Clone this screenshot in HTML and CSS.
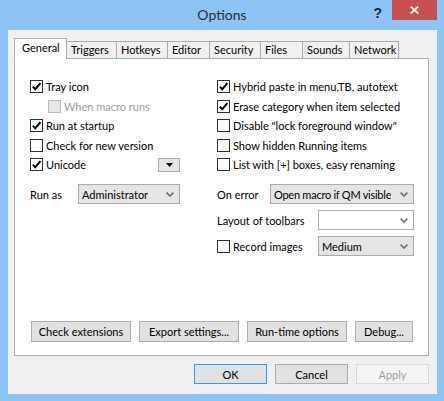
FILE: index.html
```html
<!DOCTYPE html>
<html>
<head>
<meta charset="utf-8">
<link rel="stylesheet" href="styles.css">
</head>
<body>
<div class="window">
  <div class="titlebar">
    <div></div>
    <div class="title">Options</div>
    <div class="controls">
      <span class="help">?</span>
      <span class="close"><svg width="9" height="8" viewBox="0 0 9 8"><path d="M0.8 0.5 L8.2 7.5 M8.2 0.5 L0.8 7.5" stroke="#fff" stroke-width="1.8" fill="none"/></svg></span>
    </div>
  </div>
  <div class="client">
    <div class="tabs">
      <div class="tab active t-general">General</div>
      <div class="tab t-triggers">Triggers</div>
      <div class="tab t-hotkeys">Hotkeys</div>
      <div class="tab t-editor">Editor</div>
      <div class="tab t-security">Security</div>
      <div class="tab t-files">Files</div>
      <div class="tab t-sounds">Sounds</div>
      <div class="tab t-network">Network</div>
    </div>
    <div class="panel">
      <div class="columns">
        <div class="col">
          <div class="row"><span class="box"><svg class="tick" viewBox="0 0 11 11"><path d="M1.8 5.6 L4.3 8.2 L9.4 2.2" stroke="#000" stroke-width="2" fill="none"/></svg></span><span>Tray icon</span></div>
          <div class="row indent disabled"><span class="box"></span><span>When macro runs</span></div>
          <div class="row"><span class="box"><svg class="tick" viewBox="0 0 11 11"><path d="M1.8 5.6 L4.3 8.2 L9.4 2.2" stroke="#000" stroke-width="2" fill="none"/></svg></span><span>Run at startup</span></div>
          <div class="row"><span class="box"></span><span>Check for new version</span></div>
          <div class="row split"><span class="item"><span class="box"><svg class="tick" viewBox="0 0 11 11"><path d="M1.8 5.6 L4.3 8.2 L9.4 2.2" stroke="#000" stroke-width="2" fill="none"/></svg></span><span>Unicode</span></span><span class="mini"><svg width="7" height="4" viewBox="0 0 7 4"><path d="M0 0 H7 L3.5 4 Z" fill="#000"/></svg></span></div>
          <div class="field first">
            <span class="lbl l-runas">Run as</span>
            <span class="combo"><span class="val">Administrator</span><svg class="chev" width="8" height="5" viewBox="0 0 8 5"><path d="M0.6 0.6 L4 4 L7.4 0.6" stroke="#6a6a6a" stroke-width="1.5" fill="none"/></svg></span>
          </div>
        </div>
        <div class="col">
          <div class="row"><span class="box"><svg class="tick" viewBox="0 0 11 11"><path d="M1.8 5.6 L4.3 8.2 L9.4 2.2" stroke="#000" stroke-width="2" fill="none"/></svg></span><span>Hybrid paste in menu,TB, autotext</span></div>
          <div class="row"><span class="box"><svg class="tick" viewBox="0 0 11 11"><path d="M1.8 5.6 L4.3 8.2 L9.4 2.2" stroke="#000" stroke-width="2" fill="none"/></svg></span><span>Erase category when item selected</span></div>
          <div class="row"><span class="box"></span><span>Disable "lock foreground window"</span></div>
          <div class="row"><span class="box"></span><span>Show hidden Running items</span></div>
          <div class="row"><span class="box"></span><span>List with [+] boxes, easy renaming</span></div>
          <div class="field first">
            <span class="lbl l-short">On error</span>
            <span class="combo"><span class="val tight">Open macro if QM visible</span><svg class="chev" width="8" height="5" viewBox="0 0 8 5"><path d="M0.6 0.6 L4 4 L7.4 0.6" stroke="#6a6a6a" stroke-width="1.5" fill="none"/></svg></span>
          </div>
          <div class="field">
            <span class="lbl l-long">Layout of toolbars</span>
            <span class="combo white"><span class="val"></span><svg class="chev" width="8" height="5" viewBox="0 0 8 5"><path d="M0.6 0.6 L4 4 L7.4 0.6" stroke="#6a6a6a" stroke-width="1.5" fill="none"/></svg></span>
          </div>
          <div class="field">
            <span class="lbl l-long"><span class="box"></span><span>Record images</span></span>
            <span class="combo"><span class="val">Medium</span><svg class="chev" width="8" height="5" viewBox="0 0 8 5"><path d="M0.6 0.6 L4 4 L7.4 0.6" stroke="#6a6a6a" stroke-width="1.5" fill="none"/></svg></span>
          </div>
        </div>
      </div>
      <div class="actions">
        <button class="btn wide">Check extensions</button>
        <button class="btn wide">Export settings...</button>
        <button class="btn wide">Run-time options</button>
        <button class="btn narrow">Debug...</button>
      </div>
    </div>
    <div class="footer">
      <button class="btn dlg default">OK</button>
      <button class="btn dlg">Cancel</button>
      <button class="btn dlg off">Apply</button>
    </div>
  </div>
</div>
</body>
</html>
```
FILE: styles.css
```css
html, body {
  margin: 0;
  padding: 0;
}
body {
  font-family: "Lato", "Liberation Sans", sans-serif;
  font-size: 11px;
  color: #000;
}
.window {
  width: 444px;
  height: 401px;
  box-sizing: border-box;
  background: #8bc4f5;
  display: flex;
  flex-direction: column;
}
.titlebar {
  height: 30px;
  flex: none;
  display: grid;
  grid-template-columns: 1fr auto 1fr;
}
.title {
  font-size: 14px;
  color: #2f2f2f;
  line-height: 30px;
}
.controls {
  display: flex;
  justify-content: flex-end;
  align-items: flex-start;
}
.help {
  font-family: "Liberation Sans", sans-serif;
  font-weight: bold;
  font-size: 14px;
  color: #222;
  margin-top: 5px;
  margin-right: 10px;
}
.close {
  width: 45px;
  height: 20px;
  background: #c75050;
  display: flex;
  align-items: center;
  justify-content: center;
  margin-right: 7px;
}
.client {
  flex: 1;
  margin: 0 7px 7px 8px;
  background: #f0f0f0;
  padding: 8px 8px 10px 6px;
  display: flex;
  flex-direction: column;
}
.tabs {
  display: flex;
  align-items: flex-end;
  height: 21px;
  margin-bottom: -1px;
  position: relative;
  z-index: 1;
  flex: none;
}
.tab {
  box-sizing: border-box;
  height: 18px;
  border: 1px solid #acacac;
  background: #f0f0f0;
  display: flex;
  align-items: center;
  padding-left: 4px;
  margin-left: -1px;
  padding-bottom: 1px;
}
.tab.active {
  height: 21px;
  margin-left: 0;
  background: #fff;
  border-bottom-color: #fff;
  padding-left: 7px;
  padding-bottom: 2px;
}
.t-general { width: 53px; }
.t-triggers { width: 51px; }
.t-hotkeys { width: 52px; }
.t-editor { width: 43px; }
.t-security { width: 52px; }
.t-files { width: 43px; }
.t-sounds { width: 48px; }
.t-network { width: 50px; }
.panel {
  flex: none;
  height: 298px;
  box-sizing: border-box;
  border: 1px solid #adadad;
  background: #fff;
  padding: 18px 14px 13px 15px;
  display: flex;
  flex-direction: column;
}
.columns {
  display: grid;
  grid-template-columns: 150px 1fr;
  column-gap: 37px;
}
.col {
  display: flex;
  flex-direction: column;
  min-width: 0;
}
.row {
  height: 19.5px;
  display: flex;
  align-items: center;
  white-space: nowrap;
}
.row.split {
  justify-content: space-between;
}
.item {
  display: flex;
  align-items: center;
}
.indent {
  padding-left: 18px;
}
.box {
  width: 13px;
  height: 13px;
  box-sizing: border-box;
  border: 1px solid #333;
  background: #fff;
  margin-right: 3px;
  flex: none;
  display: flex;
}
.tick {
  width: 11px;
  height: 11px;
}
.disabled {
  color: #a0a0a0;
}
.disabled .box {
  border-color: #bcbcbc;
  background: #e6e6e6;
}
.mini {
  box-sizing: border-box;
  width: 22px;
  height: 14px;
  border: 1px solid #acacac;
  background: #e5e5e5;
  display: flex;
  align-items: center;
  justify-content: center;
}
.field {
  height: 20px;
  display: flex;
  align-items: center;
  margin-top: 6px;
  white-space: nowrap;
}
.field.first {
  margin-top: 9.5px;
}
.lbl {
  flex: none;
  display: flex;
  align-items: center;
}
.l-runas { width: 48px; }
.l-short { width: 53px; }
.l-long { width: 101px; }
.combo {
  flex: 1;
  min-width: 0;
  overflow: hidden;
  height: 20px;
  box-sizing: border-box;
  border: 1px solid #acacac;
  background: #e5e5e5;
  display: flex;
  align-items: center;
  justify-content: space-between;
  gap: 4px;
  padding: 0 5px 0 3px;
}
.combo.white {
  background: #fff;
}
.val {
  overflow: hidden;
}
.tight {
  letter-spacing: -0.25px;
}
.chev {
  flex: none;
}
.actions {
  margin-top: auto;
  display: flex;
  gap: 8px;
  padding-left: 1px;
}
.btn {
  font: inherit;
  color: #000;
  margin: 0;
  padding: 0;
  box-sizing: border-box;
  border: 1px solid #adadad;
  background: #e1e1e1;
  height: 21px;
  display: flex;
  align-items: center;
  justify-content: center;
}
.wide { width: 100px; }
.narrow { width: 58px; }
.footer {
  margin-top: 8px;
  display: flex;
  justify-content: flex-end;
  gap: 8px;
  flex: none;
}
.dlg {
  width: 73px;
  height: 20px;
}
.default {
  border-color: #3399ff;
}
.off {
  background: #f4f4f4;
  border-color: #d9d9d9;
  color: #a0a0a0;
}
```
